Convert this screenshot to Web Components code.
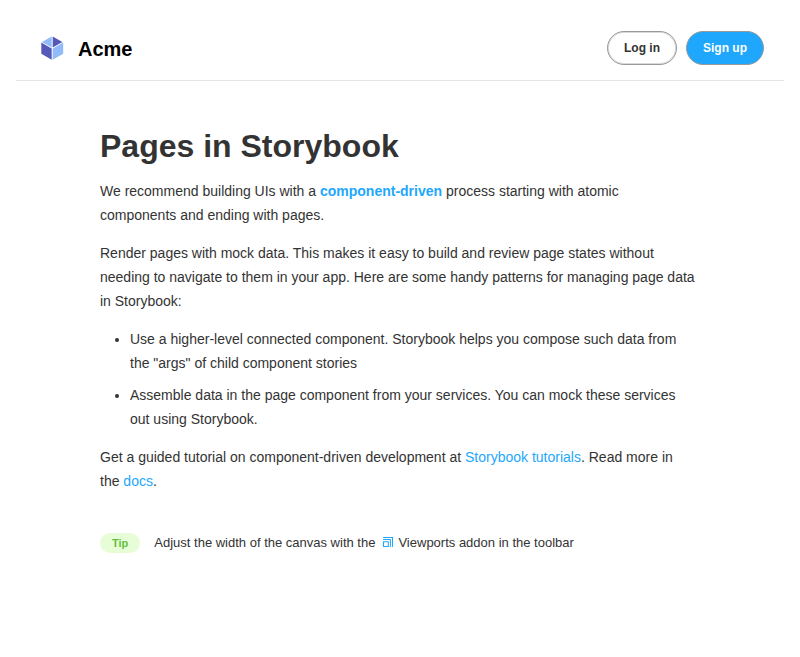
<!DOCTYPE html>
<html lang="en">
<head>
<meta charset="utf-8">
<meta name="viewport" content="width=device-width, initial-scale=1">
<title>Acme</title>
<style>
body { margin: 0; padding: 16px; background: #fff; color: #333; font-family: "Liberation Sans", Arial, sans-serif; }
</style>
</head>
<body>
<acme-page></acme-page>
<script>
const define = (name, html) => {
  const template = document.createElement('template');
  template.innerHTML = html;
  customElements.define(name, class extends HTMLElement {
    constructor() {
      super();
      this.attachShadow({ mode: 'open' }).append(template.content.cloneNode(true));
    }
  });
};

define('acme-logo', `
<style>
  :host { display: flex; align-items: center; gap: 10px; }
  h1 { margin: 0; padding-top: 2px; font-size: 20px; line-height: 24px; font-weight: 700; color: #000; }
</style>
<svg width="32" height="32" viewBox="0 0 32 32" aria-hidden="true">
  <g fill-rule="evenodd">
    <path d="M10 0h12a10 10 0 0110 10v12a10 10 0 01-10 10H10A10 10 0 010 22V10A10 10 0 0110 0z" fill="#FFF"/>
    <path d="M5.3 10.6l10.4 6v11.1l-10.4-6v-11zm11.4-6.2l9.7 5.5-9.7 5.6V4.4z" fill="#555AB9"/>
    <path d="M27.2 10.6v11.2l-10.5 6V16.5l10.5-6zM15.7 4.4v11L6 10l9.7-5.5z" fill="#91BAF8"/>
  </g>
</svg>
<h1><slot></slot></h1>`);

define('acme-button', `
<style>
  :host { display: inline-block; }
  button { display: block; margin: 0; padding: 9px 16px; border: 1px solid #999; border-radius: 48px; font: 700 12px/14px "Liberation Sans", Arial, sans-serif; color: #333; background: #fff; box-shadow: rgba(0,0,0,.15) 0 0 0 1px inset; cursor: pointer; }
  :host([primary]) button { color: #fff; background: #1ea7fd; box-shadow: none; }
</style>
<button type="button"><slot></slot></button>`);

define('acme-header', `
<style>
  :host { display: block; }
  header { display: flex; align-items: center; justify-content: space-between; padding: 15px 20px; border-bottom: 1px solid rgba(0,0,0,.1); }
  div { display: flex; gap: 9px; }
</style>
<header>
  <acme-logo>Acme</acme-logo>
  <div><acme-button>Log in</acme-button><acme-button primary>Sign up</acme-button></div>
</header>`);

define('acme-tip', `
<style>
  :host { display: flex; align-items: center; gap: 14px; margin: 40px 0; font-size: 13px; line-height: 20px; }
  .tag { padding: 4px 12px; border-radius: 16px; background: #e7fdd8; color: #66bf3c; font-size: 11px; line-height: 12px; font-weight: 700; }
  svg { width: 12px; height: 12px; margin: 0 4px 0 7px; vertical-align: -1px; }
</style>
<span class="tag">Tip</span>
<span>Adjust the width of the canvas with the<svg viewBox="0 0 12 12" aria-hidden="true"><path d="M1.5 5.2h4.8c.3 0 .5.2.5.4v5.1c-.1.2-.3.3-.4.3H1.4a.5.5 0 01-.5-.4V5.7c0-.3.2-.5.5-.5zm0-2.1h6.9c.3 0 .5.2.5.4v7a.5.5 0 01-1 0V4H1.5a.5.5 0 010-1zm0-2.1h9c.3 0 .5.2.5.4v9.1a.5.5 0 01-1 0V2H1.5a.5.5 0 010-1zm4.3 5.2H2V10h3.8V6.2z" fill="#1ea7fd" fill-rule="evenodd"/></svg>Viewports addon in the toolbar</span>`);

define('acme-page', `
<style>
  :host { display: block; }
  section { max-width: 600px; margin: 0 auto; padding: 48px 20px; font-size: 14px; line-height: 24px; }
  h2 { margin: 0 0 16px; font-size: 32px; line-height: 34px; font-weight: 700; }
  p, ul { box-sizing: border-box; max-width: 595px; margin: 14px 0; }
  ul { padding-left: 30px; }
  li { margin-bottom: 8px; }
  a { color: #1ea7fd; text-decoration: none; }
  .strong { font-weight: 700; }
</style>
<acme-header></acme-header>
<section>
  <h2>Pages in Storybook</h2>
  <p>We recommend building UIs with a <a class="strong" href="#component-driven">component-driven</a> process starting with atomic components and ending with pages.</p>
  <p>Render pages with mock data. This makes it easy to build and review page states without needing to navigate to them in your app. Here are some handy patterns for managing page data in Storybook:</p>
  <ul>
    <li>Use a higher-level connected component. Storybook helps you compose such data from the "args" of child component stories</li>
    <li>Assemble data in the page component from your services. You can mock these services out using Storybook.</li>
  </ul>
  <p>Get a guided tutorial on component-driven development at <a href="#tutorials">Storybook tutorials</a>. Read more in the <a href="#docs">docs</a>.</p>
  <acme-tip></acme-tip>
</section>`);
</script>
</body>
</html>
